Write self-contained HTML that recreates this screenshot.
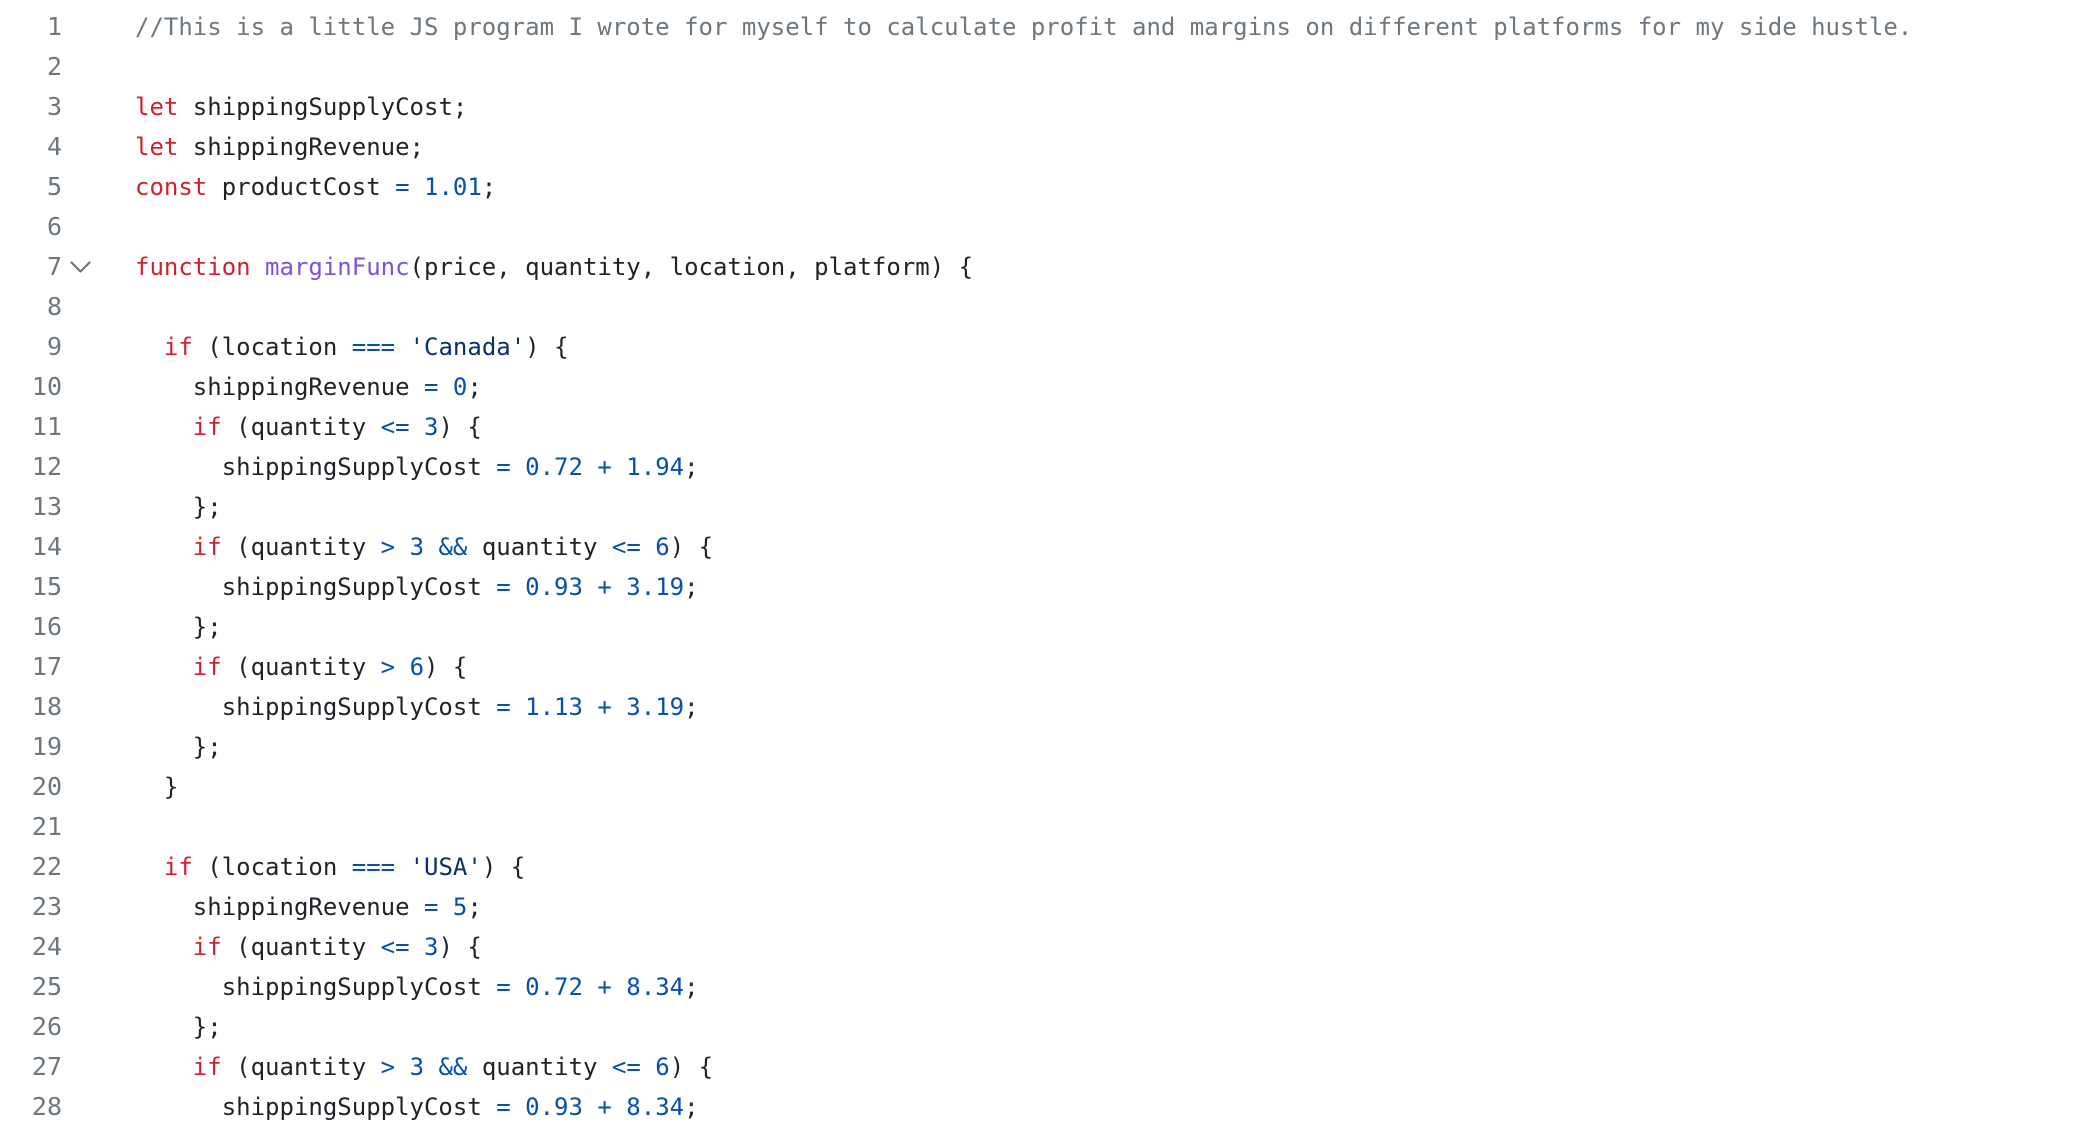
<!DOCTYPE html>
<html><head><meta charset="utf-8"><style>
html,body{margin:0;background:#fff;width:2080px;height:1132px;overflow:hidden}
.c{position:absolute;top:7px;left:0;font-family:"DejaVu Sans Mono","Liberation Mono",monospace;font-size:24px;line-height:40px;color:#1f2328}
.c>div{position:relative;height:40px}
.n{position:absolute;left:0;width:62px;text-align:right;color:#6e7781;font-size:25px}
.t{position:absolute;left:135px;white-space:pre}
.k{color:#cf222e}.o{color:#0550ae}.f{color:#8250df}.s{color:#0a3069}.m{color:#6e7781}
</style></head><body>
<div class="c"><div><span class="n">1</span><span class="t m">//This is a little JS program I wrote for myself to calculate profit and margins on different platforms for my side hustle.</span></div><div><span class="n">2</span></div><div><span class="n">3</span><span class="t"><span class="k">let</span> shippingSupplyCost;</span></div><div><span class="n">4</span><span class="t"><span class="k">let</span> shippingRevenue;</span></div><div><span class="n">5</span><span class="t"><span class="k">const</span> productCost <span class="o">=</span> <span class="o">1.01</span>;</span></div><div><span class="n">6</span></div><div><span class="n">7</span><svg style="position:absolute;left:70px;top:14px" width="21" height="13" viewBox="0 0 21 13"><path d="M1.5 1.5 L10.5 10.5 L19.5 1.5" fill="none" stroke="#6e7781" stroke-width="2.2" stroke-linecap="round" stroke-linejoin="round"/></svg><span class="t"><span class="k">function</span> <span class="f">marginFunc</span>(price, quantity, location, platform) {</span></div><div><span class="n">8</span></div><div><span class="n">9</span><span class="t">  <span class="k">if</span> (location <span class="o">===</span> <span class="s">'Canada'</span>) {</span></div><div><span class="n">10</span><span class="t">    shippingRevenue <span class="o">=</span> <span class="o">0</span>;</span></div><div><span class="n">11</span><span class="t">    <span class="k">if</span> (quantity <span class="o">&lt;=</span> <span class="o">3</span>) {</span></div><div><span class="n">12</span><span class="t">      shippingSupplyCost <span class="o">=</span> <span class="o">0.72</span> <span class="o">+</span> <span class="o">1.94</span>;</span></div><div><span class="n">13</span><span class="t">    };</span></div><div><span class="n">14</span><span class="t">    <span class="k">if</span> (quantity <span class="o">&gt;</span> <span class="o">3</span> <span class="o">&amp;&amp;</span> quantity <span class="o">&lt;=</span> <span class="o">6</span>) {</span></div><div><span class="n">15</span><span class="t">      shippingSupplyCost <span class="o">=</span> <span class="o">0.93</span> <span class="o">+</span> <span class="o">3.19</span>;</span></div><div><span class="n">16</span><span class="t">    };</span></div><div><span class="n">17</span><span class="t">    <span class="k">if</span> (quantity <span class="o">&gt;</span> <span class="o">6</span>) {</span></div><div><span class="n">18</span><span class="t">      shippingSupplyCost <span class="o">=</span> <span class="o">1.13</span> <span class="o">+</span> <span class="o">3.19</span>;</span></div><div><span class="n">19</span><span class="t">    };</span></div><div><span class="n">20</span><span class="t">  }</span></div><div><span class="n">21</span></div><div><span class="n">22</span><span class="t">  <span class="k">if</span> (location <span class="o">===</span> <span class="s">'USA'</span>) {</span></div><div><span class="n">23</span><span class="t">    shippingRevenue <span class="o">=</span> <span class="o">5</span>;</span></div><div><span class="n">24</span><span class="t">    <span class="k">if</span> (quantity <span class="o">&lt;=</span> <span class="o">3</span>) {</span></div><div><span class="n">25</span><span class="t">      shippingSupplyCost <span class="o">=</span> <span class="o">0.72</span> <span class="o">+</span> <span class="o">8.34</span>;</span></div><div><span class="n">26</span><span class="t">    };</span></div><div><span class="n">27</span><span class="t">    <span class="k">if</span> (quantity <span class="o">&gt;</span> <span class="o">3</span> <span class="o">&amp;&amp;</span> quantity <span class="o">&lt;=</span> <span class="o">6</span>) {</span></div><div><span class="n">28</span><span class="t">      shippingSupplyCost <span class="o">=</span> <span class="o">0.93</span> <span class="o">+</span> <span class="o">8.34</span>;</span></div></div>
</body></html>
